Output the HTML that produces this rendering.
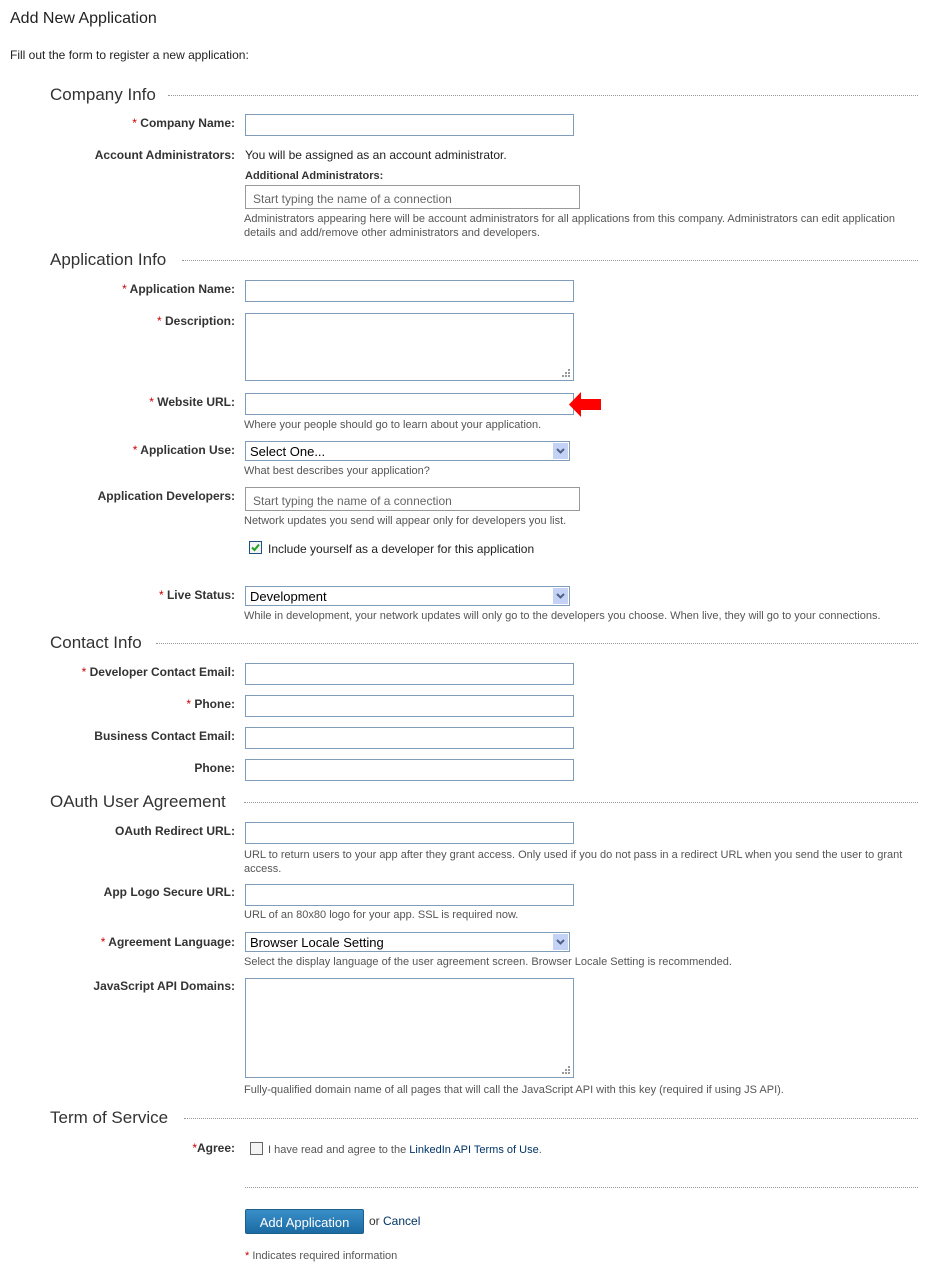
<!DOCTYPE html>
<html><head><meta charset="utf-8"><style>
body{margin:0;width:929px;height:1271px;background:#fff;font-family:"Liberation Sans",Arial,sans-serif;color:#000;position:relative;overflow:hidden}
.a{position:absolute;white-space:nowrap}
.lbl{position:absolute;right:694px;font-size:12px;font-weight:bold;color:#333;line-height:14px;white-space:nowrap;margin-top:1px}
.req{color:#c00;font-weight:normal}
.h{position:absolute;left:50px;font-size:17px;color:#333;line-height:20px;white-space:nowrap;margin-top:1px}
.dot{position:absolute;border-top:1px dotted #999;right:11px;height:0}
.in{position:absolute;left:245px;width:327px;height:20px;border:1px solid #7f9db9;background:#fff}
.gin{position:absolute;left:245px;width:333px;height:22px;border:1px solid #999;background:#fff;font-size:12px;color:#666;line-height:26px;text-indent:7px}
.help{position:absolute;left:244px;font-size:11px;color:#555;line-height:14px;margin-top:1px}
.sel{position:absolute;left:245px;width:323px;height:18px;border:1px solid #7f9db9;background:#fff;font-size:13px;line-height:19px;text-indent:4px}
.sel .b{position:absolute;right:1px;top:1px;width:15px;height:16px;background:#c4d3f5;border:0}
.sel .b svg{position:absolute;left:3px;top:5px}
.grip{position:absolute;right:2px;bottom:2px}
</style></head><body>
<div class="a" style="left:10px;top:10px;font-size:16px;color:#222">Add New Application</div>
<div class="a" style="left:10px;top:48px;font-size:12px;color:#222">Fill out the form to register a new application:</div>

<div class="h" style="top:84px">Company Info</div><div class="dot" style="left:168px;top:95px"></div>
<div class="lbl" style="top:115px"><span class="req">*</span> Company Name:</div>
<div class="in" style="top:114px"></div>
<div class="lbl" style="top:147px">Account Administrators:</div>
<div class="a" style="left:245px;top:148px;font-size:12px;color:#222">You will be assigned as an account administrator.</div>
<div class="a" style="left:245px;top:170px;font-size:11px;font-weight:bold;color:#333">Additional Administrators:</div>
<div class="gin" style="top:185px">Start typing the name of a connection</div>
<div class="help" style="top:211px">Administrators appearing here will be account administrators for all applications from this company. Administrators can edit application<br>details and add/remove other administrators and developers.</div>

<div class="h" style="top:249px">Application Info</div><div class="dot" style="left:182px;top:260px"></div>
<div class="lbl" style="top:281px"><span class="req">*</span> Application Name:</div>
<div class="in" style="top:280px"></div>
<div class="lbl" style="top:313px"><span class="req">*</span> Description:</div>
<div class="in" style="top:313px;height:66px"><svg class="grip" width="9" height="9"><g fill="#999"><rect x="6" y="0" width="2" height="2"/><rect x="3" y="3" width="2" height="2"/><rect x="6" y="3" width="2" height="2"/><rect x="0" y="6" width="2" height="2"/><rect x="3" y="6" width="2" height="2"/><rect x="6" y="6" width="2" height="2"/></g></svg></div>
<div class="lbl" style="top:394px"><span class="req">*</span> Website URL:</div>
<div class="in" style="top:393px"></div>
<svg class="a" style="left:569px;top:392px" width="33" height="25"><polygon points="0,12.5 12,0 12,7 32,7 32,18 12,18 12,25" fill="#f00"/></svg>
<div class="help" style="top:417px">Where your people should go to learn about your application.</div>
<div class="lbl" style="top:442px"><span class="req">*</span> Application Use:</div>
<div class="sel" style="top:441px">Select One...<div class="b"><svg width="9" height="6"><path d="M1 1l3.5 3.5L8 1" stroke="#4d6185" stroke-width="2" fill="none"/></svg></div></div>
<div class="help" style="top:463px">What best describes your application?</div>
<div class="lbl" style="top:488px">Application Developers:</div>
<div class="gin" style="top:487px">Start typing the name of a connection</div>
<div class="help" style="top:513px">Network updates you send will appear only for developers you list.</div>
<div class="a" style="left:249px;top:541px;width:11px;height:11px;border:1px solid #1c5180;background:#f4f4f4"><svg width="11" height="11" style="position:absolute;left:0;top:0"><path d="M2 5.5l2.5 2.5L9 2.5" stroke="#21a121" stroke-width="2" fill="none"/></svg></div>
<div class="a" style="left:268px;top:542px;font-size:12px;color:#222">Include yourself as a developer for this application</div>
<div class="lbl" style="top:587px"><span class="req">*</span> Live Status:</div>
<div class="sel" style="top:586px">Development<div class="b"><svg width="9" height="6"><path d="M1 1l3.5 3.5L8 1" stroke="#4d6185" stroke-width="2" fill="none"/></svg></div></div>
<div class="help" style="top:608px">While in development, your network updates will only go to the developers you choose. When live, they will go to your connections.</div>

<div class="h" style="top:632px">Contact Info</div><div class="dot" style="left:156px;top:643px"></div>
<div class="lbl" style="top:664px"><span class="req">*</span> Developer Contact Email:</div>
<div class="in" style="top:663px"></div>
<div class="lbl" style="top:696px"><span class="req">*</span> Phone:</div>
<div class="in" style="top:695px"></div>
<div class="lbl" style="top:728px">Business Contact Email:</div>
<div class="in" style="top:727px"></div>
<div class="lbl" style="top:760px">Phone:</div>
<div class="in" style="top:759px"></div>

<div class="h" style="top:791px">OAuth User Agreement</div><div class="dot" style="left:244px;top:802px"></div>
<div class="lbl" style="top:823px">OAuth Redirect URL:</div>
<div class="in" style="top:822px"></div>
<div class="help" style="top:847px">URL to return users to your app after they grant access. Only used if you do not pass in a redirect URL when you send the user to grant<br>access.</div>
<div class="lbl" style="top:884px">App Logo Secure URL:</div>
<div class="in" style="top:884px"></div>
<div class="help" style="top:907px">URL of an 80x80 logo for your app. SSL is required now.</div>
<div class="lbl" style="top:934px"><span class="req">*</span> Agreement Language:</div>
<div class="sel" style="top:932px">Browser Locale Setting<div class="b"><svg width="9" height="6"><path d="M1 1l3.5 3.5L8 1" stroke="#4d6185" stroke-width="2" fill="none"/></svg></div></div>
<div class="help" style="top:954px">Select the display language of the user agreement screen. Browser Locale Setting is recommended.</div>
<div class="lbl" style="top:978px">JavaScript API Domains:</div>
<div class="in" style="top:978px;height:98px"><svg class="grip" width="9" height="9"><g fill="#999"><rect x="6" y="0" width="2" height="2"/><rect x="3" y="3" width="2" height="2"/><rect x="6" y="3" width="2" height="2"/><rect x="0" y="6" width="2" height="2"/><rect x="3" y="6" width="2" height="2"/><rect x="6" y="6" width="2" height="2"/></g></svg></div>
<div class="help" style="top:1082px">Fully-qualified domain name of all pages that will call the JavaScript API with this key (required if using JS API).</div>

<div class="h" style="top:1107px">Term of Service</div><div class="dot" style="left:184px;top:1118px"></div>
<div class="lbl" style="top:1140px"><span class="req">*</span>Agree:</div>
<div class="a" style="left:250px;top:1142px;width:11px;height:11px;border:1px solid #666;background:#f4f4f4"></div>
<div class="a" style="left:268px;top:1144px;font-size:11px;color:#555">I have read and agree to the <span style="color:#036">LinkedIn API Terms of Use</span>.</div>
<div class="dot" style="left:245px;top:1187px"></div>
<div class="a" style="left:245px;top:1209px;width:117px;height:23px;border:1px solid #1c5e8c;border-radius:2px;background:linear-gradient(#3a8fc8,#1b6aa3);color:#fff;font-size:13px;line-height:25px;text-align:center">Add Application</div>
<div class="a" style="left:369px;top:1214px;font-size:12px;color:#333">or <span style="color:#036">Cancel</span></div>
<div class="a" style="left:245px;top:1250px;font-size:11px;color:#555"><span style="color:#c00">*</span> Indicates required information</div>
</body></html>
